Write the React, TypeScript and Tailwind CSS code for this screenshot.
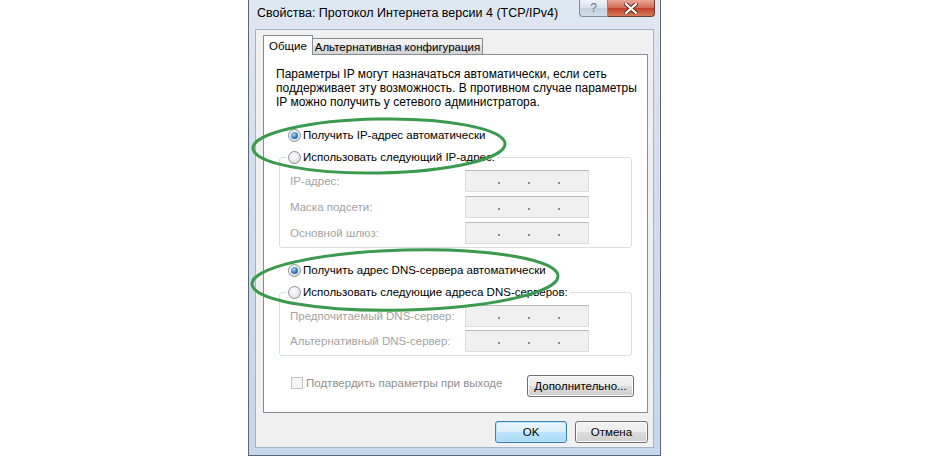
import React from "react";

function Radio({ checked }: { checked?: boolean }) {
  return (
    <span className="w-[13px] h-[13px] rounded-full border border-[#8a8e93] bg-[radial-gradient(circle_at_40%_35%,#ffffff_0%,#e9e9e9_55%,#cfcfcf_100%)] flex items-center justify-center shrink-0">
      {checked && (
        <span className="w-[7px] h-[7px] rounded-full bg-[radial-gradient(circle_at_40%_35%,#a9dcf8_0%,#2e76bd_55%,#1b4f8a_100%)]" />
      )}
    </span>
  );
}

function IpField() {
  return (
    <div className="w-[124px] h-[22px] shrink-0 border border-[#dcdcdc] border-t-[#b9b9b9] bg-[#f0f0f0] flex items-center pt-[3px]">
      <span className="w-[32px]" />
      <span className="w-[2px] h-[2px] bg-[#8c8c8c]" />
      <span className="w-[28px]" />
      <span className="w-[2px] h-[2px] bg-[#8c8c8c]" />
      <span className="w-[28px]" />
      <span className="w-[2px] h-[2px] bg-[#8c8c8c]" />
    </div>
  );
}

function FieldRow({ label }: { label: string }) {
  return (
    <div className="flex items-center h-[22px]">
      <span className="w-[185px] shrink-0 pl-[10px] whitespace-nowrap text-[#a3a3a3] text-[11.5px]">{label}</span>
      <IpField />
    </div>
  );
}

function Btn({ children, primary, w }: { children: React.ReactNode; primary?: boolean; w: string }) {
  return (
    <div
      className={
        "h-[22px] rounded-[3px] border flex items-center justify-center whitespace-nowrap text-black text-[11.5px] " +
        w +
        (primary
          ? " border-[#3c7fb1] bg-[linear-gradient(to_bottom,#eaf6fd_0%,#d9f0fc_50%,#bee6fd_50%,#a7d9f5_100%)] shadow-[inset_0_0_0_1px_#b8e3f8]"
          : " border-[#707070] bg-[linear-gradient(to_bottom,#f2f2f2_0%,#ebebeb_50%,#dddddd_50%,#cfcfcf_100%)] shadow-[inset_0_0_0_1px_#fcfcfc]")
      }
    >
      {children}
    </div>
  );
}

export default function App() {
  return (
    <div className="w-[952px] h-[459px] bg-white relative overflow-hidden font-['Liberation_Sans',sans-serif] text-[11.5px] leading-[14px] text-black">
      <div className="flex pl-[248px]">
        {/* window */}
        <div className="w-[413px] h-[456px] border border-[#5a6676] border-t-0 bg-[linear-gradient(to_bottom,#dfe7f1_0%,#d2deed_40%,#c6d6eb_100%)] flex flex-col">
          {/* title bar */}
          <div className="h-[29px] flex items-start">
            <div className="pl-[8px] pt-[6px] text-[12.5px] leading-[15px] text-black whitespace-nowrap">
              Свойства: Протокол Интернета версии 4 (TCP/IPv4)
            </div>
            <div className="ml-auto mr-[5px] flex">
              <div className="w-[29px] h-[17px] border border-[#7e8a98] border-t-0 rounded-bl-[4px] bg-[linear-gradient(to_bottom,#eef3f8_0%,#d6e0eb_50%,#c2cfdd_50%,#d2dde9_100%)] flex items-center justify-center text-[12px] leading-[12px] text-[#6b7582]">
                ?
              </div>
              <div className="w-[47px] h-[17px] border border-[#6e3b32] border-t-0 border-l-0 rounded-br-[4px] bg-[linear-gradient(to_bottom,#e9a896_0%,#d46a52_50%,#c0402a_50%,#d77a5c_100%)] flex items-center justify-center">
                <svg width="14" height="11" viewBox="0 0 14 11">
                  <path d="M2 1 L12 10 M12 1 L2 10" stroke="#5a2a22" strokeWidth="4" strokeLinecap="square" />
                  <path d="M2 1 L12 10 M12 1 L2 10" stroke="#ffffff" strokeWidth="2.2" strokeLinecap="square" />
                </svg>
              </div>
            </div>
          </div>
          {/* client area */}
          <div className="mx-[6px] mb-[7px] flex-1 border border-[#a3b3c7] bg-[#f0f0f0] flex flex-col">
            {/* tabs */}
            <div className="flex items-end pl-[7px] pt-[5px] relative z-10 -mb-px">
              <div className="w-[50px] h-[20px] bg-white border border-[#898c95] border-b-0 flex items-center justify-center pt-[1px] whitespace-nowrap">
                Общие
              </div>
              <div className="w-[170px] h-[17px] border border-[#898c95] border-l-0 bg-[linear-gradient(to_bottom,#f3f3f3_0%,#ebebeb_50%,#dddddd_50%,#d4d4d4_100%)] flex items-center justify-center whitespace-nowrap">
                Альтернативная конфигурация
              </div>
            </div>
            {/* panel */}
            <div className="ml-[7px] w-[385px] h-[359px] bg-white border border-[#898c95] flex flex-col">
              <p className="pl-[12px] pt-[12px] whitespace-nowrap text-[12px]">
                Параметры IP могут назначаться автоматически, если сеть
                <br />
                поддерживает эту возможность. В противном случае параметры
                <br />
                IP можно получить у сетевого администратора.
              </p>
              <div className="mt-[15px] pl-[24px] h-[22px] flex items-center gap-[2px]">
                <Radio checked />
                <span className="whitespace-nowrap">Получить IP-адрес автоматически</span>
              </div>
              <fieldset className="mx-[15px] border border-[#d5dfe5] rounded-[3px] pt-[2px] pb-[3px] flex flex-col gap-[4px]">
                <legend className="ml-[7px] pl-[1px] pr-[2px] h-[22px] flex items-center gap-[2px]">
                  <Radio />
                  <span className="whitespace-nowrap">Использовать следующий IP-адрес:</span>
                </legend>
                <FieldRow label="IP-адрес:" />
                <FieldRow label="Маска подсети:" />
                <FieldRow label="Основной шлюз:" />
              </fieldset>
              <div className="mt-[11px] pl-[24px] h-[22px] flex items-center gap-[2px]">
                <Radio checked />
                <span className="whitespace-nowrap">Получить адрес DNS-сервера автоматически</span>
              </div>
              <fieldset className="mx-[15px] border border-[#d5dfe5] rounded-[3px] pt-[2px] pb-[3px] flex flex-col gap-[3px]">
                <legend className="ml-[7px] pl-[1px] pr-[2px] h-[22px] flex items-center gap-[2px]">
                  <Radio />
                  <span className="whitespace-nowrap">Использовать следующие адреса DNS-серверов:</span>
                </legend>
                <FieldRow label="Предпочитаемый DNS-сервер:" />
                <FieldRow label="Альтернативный DNS-сервер:" />
              </fieldset>
              <div className="mt-[19px] pl-[27px] pr-[13px] flex items-start justify-between">
                <div className="flex items-center gap-[3px] pt-[1px]">
                  <span className="w-[12px] h-[12px] border border-[#c2c2c2] bg-[#f4f4f4]" />
                  <span className="text-[#8f8f8f] whitespace-nowrap">Подтвердить параметры при выходе</span>
                </div>
                <Btn w="w-[107px]">Дополнительно...</Btn>
              </div>
            </div>
            {/* bottom buttons */}
            <div className="mt-[8px] ml-[7px] w-[385px] flex justify-end gap-[8px]">
              <Btn primary w="w-[72px]">OK</Btn>
              <Btn w="w-[73px]">Отмена</Btn>
            </div>
          </div>
        </div>
      </div>
      {/* green annotation ellipses */}
      <svg className="absolute left-0 top-0 pointer-events-none" width="952" height="459" viewBox="0 0 952 459">
        <ellipse cx="379" cy="146" rx="126" ry="27" fill="none" stroke="#3a9a4e" strokeWidth="3" transform="rotate(-1 379 146)" />
        <ellipse cx="405" cy="280" rx="153" ry="30" fill="none" stroke="#3a9a4e" strokeWidth="3" transform="rotate(-1.5 405 280)" />
      </svg>
    </div>
  );
}
